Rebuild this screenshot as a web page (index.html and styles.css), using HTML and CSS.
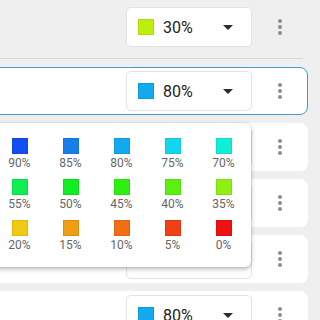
FILE: index.html
```html
<!DOCTYPE html>
<html>
<head>
<meta charset="utf-8">
<link rel="stylesheet" href="styles.css">
</head>
<body>
<div class="list">
  <div class="row">
    <div class="select"><span class="swatch c30"></span><span class="value">30%</span><span class="caret"></span></div>
    <div class="kebab"><span></span><span></span><span></span></div>
  </div>
  <div class="divider"></div>
  <div class="row card active">
    <div class="select"><span class="swatch c80"></span><span class="value">80%</span><span class="caret"></span></div>
    <div class="kebab"><span></span><span></span><span></span></div>
  </div>
  <div class="row card">
    <div class="select"><span class="swatch c50"></span><span class="value">50%</span><span class="caret"></span></div>
    <div class="kebab"><span></span><span></span><span></span></div>
  </div>
  <div class="row card">
    <div class="select"><span class="swatch c50"></span><span class="value">50%</span><span class="caret"></span></div>
    <div class="kebab"><span></span><span></span><span></span></div>
  </div>
  <div class="row card">
    <div class="select"><span class="swatch c50"></span><span class="value">50%</span><span class="caret"></span></div>
    <div class="kebab"><span></span><span></span><span></span></div>
  </div>
  <div class="row card">
    <div class="select"><span class="swatch c80"></span><span class="value">80%</span><span class="caret"></span></div>
    <div class="kebab"><span></span><span></span><span></span></div>
  </div>

  <div class="palette">
    <div class="opt"><span class="swatch c100"></span><span class="label">100%</span></div>
    <div class="opt"><span class="swatch c95"></span><span class="label">95%</span></div>
    <div class="opt"><span class="swatch c90"></span><span class="label">90%</span></div>
    <div class="opt"><span class="swatch c85"></span><span class="label">85%</span></div>
    <div class="opt"><span class="swatch c80"></span><span class="label">80%</span></div>
    <div class="opt"><span class="swatch c75"></span><span class="label">75%</span></div>
    <div class="opt"><span class="swatch c70"></span><span class="label">70%</span></div>
    <div class="opt"><span class="swatch c65"></span><span class="label">65%</span></div>
    <div class="opt"><span class="swatch c60"></span><span class="label">60%</span></div>
    <div class="opt"><span class="swatch c55"></span><span class="label">55%</span></div>
    <div class="opt"><span class="swatch c50"></span><span class="label">50%</span></div>
    <div class="opt"><span class="swatch c45"></span><span class="label">45%</span></div>
    <div class="opt"><span class="swatch c40"></span><span class="label">40%</span></div>
    <div class="opt"><span class="swatch c35"></span><span class="label">35%</span></div>
    <div class="opt"><span class="swatch c30"></span><span class="label">30%</span></div>
    <div class="opt"><span class="swatch c25"></span><span class="label">25%</span></div>
    <div class="opt"><span class="swatch c20"></span><span class="label">20%</span></div>
    <div class="opt"><span class="swatch c15"></span><span class="label">15%</span></div>
    <div class="opt"><span class="swatch c10"></span><span class="label">10%</span></div>
    <div class="opt"><span class="swatch c5"></span><span class="label">5%</span></div>
    <div class="opt"><span class="swatch c0"></span><span class="label">0%</span></div>
  </div>
</div>
</body>
</html>
```

FILE: styles.css
```css
html, body {
  margin: 0;
  padding: 0;
  background: #efefef;
  overflow: hidden;
}
body {
  font-family: Roboto, "Liberation Sans", sans-serif;
  width: 320px;
  height: 320px;
}
.list {
  position: relative;
  margin-left: -60px;
  width: 368px;
  padding-top: 3px;
}
.row {
  display: flex;
  justify-content: flex-end;
  align-items: center;
  height: 48px;
  box-sizing: border-box;
  border: 1px solid transparent;
  border-radius: 8px;
}
.card {
  background: #ffffff;
  margin-bottom: 8px;
}
.card.active {
  border-color: #3f9bde;
}
.divider {
  height: 1px;
  background: #d8d8d8;
  margin: 7px 5px 8px 0;
}
.select {
  display: flex;
  align-items: center;
  box-sizing: border-box;
  width: 126px;
  height: 40px;
  padding-left: 11px;
  background: #ffffff;
  border: 1px solid #e3e3e3;
  border-radius: 5px;
}
.select .swatch {
  width: 16px;
  height: 16px;
  margin-right: 9px;
}
.value {
  font-size: 16px;
  color: #222222;
}
.caret {
  width: 0;
  height: 0;
  margin-left: auto;
  margin-right: 18px;
  border-left: 5px solid transparent;
  border-right: 5px solid transparent;
  border-top: 5px solid #2b2b2b;
}
.kebab {
  width: 55px;
  display: flex;
  flex-direction: column;
  align-items: center;
  gap: 2px;
}
.kebab span {
  width: 4px;
  height: 4px;
  border-radius: 50%;
  background: #8c8c8c;
}
.swatch {
  display: block;
  box-sizing: border-box;
  width: 16px;
  height: 16px;
  border: 1px solid rgba(0, 0, 0, 0.08);
}
.palette {
  position: absolute;
  top: 123px;
  right: 57px;
  display: grid;
  grid-template-columns: repeat(7, 51px);
  row-gap: 9px;
  padding: 15px 2px;
  background: #ffffff;
  border-radius: 6px;
  box-shadow: 0 2px 5px rgba(0, 0, 0, 0.28), 0 0 2px rgba(0, 0, 0, 0.12);
}
.opt {
  display: flex;
  flex-direction: column;
  align-items: center;
}
.label {
  margin-top: 2px;
  font-size: 12px;
  line-height: 14px;
  color: #666666;
}
.c100 { background: #1028ee; }
.c95 { background: #103aee; }
.c90 { background: #124ff0; }
.c85 { background: #187ee9; }
.c80 { background: #12a9ef; }
.c75 { background: #14d5f0; }
.c70 { background: #12efd8; }
.c65 { background: #10eeaa; }
.c60 { background: #10ee80; }
.c55 { background: #10ef52; }
.c50 { background: #10ee22; }
.c45 { background: #2ef010; }
.c40 { background: #5cf012; }
.c35 { background: #8ef012; }
.c30 { background: #bbef0c; }
.c25 { background: #e0ee10; }
.c20 { background: #f0c912; }
.c15 { background: #f09c14; }
.c10 { background: #f06f14; }
.c5 { background: #f04116; }
.c0 { background: #f01212; }
```
